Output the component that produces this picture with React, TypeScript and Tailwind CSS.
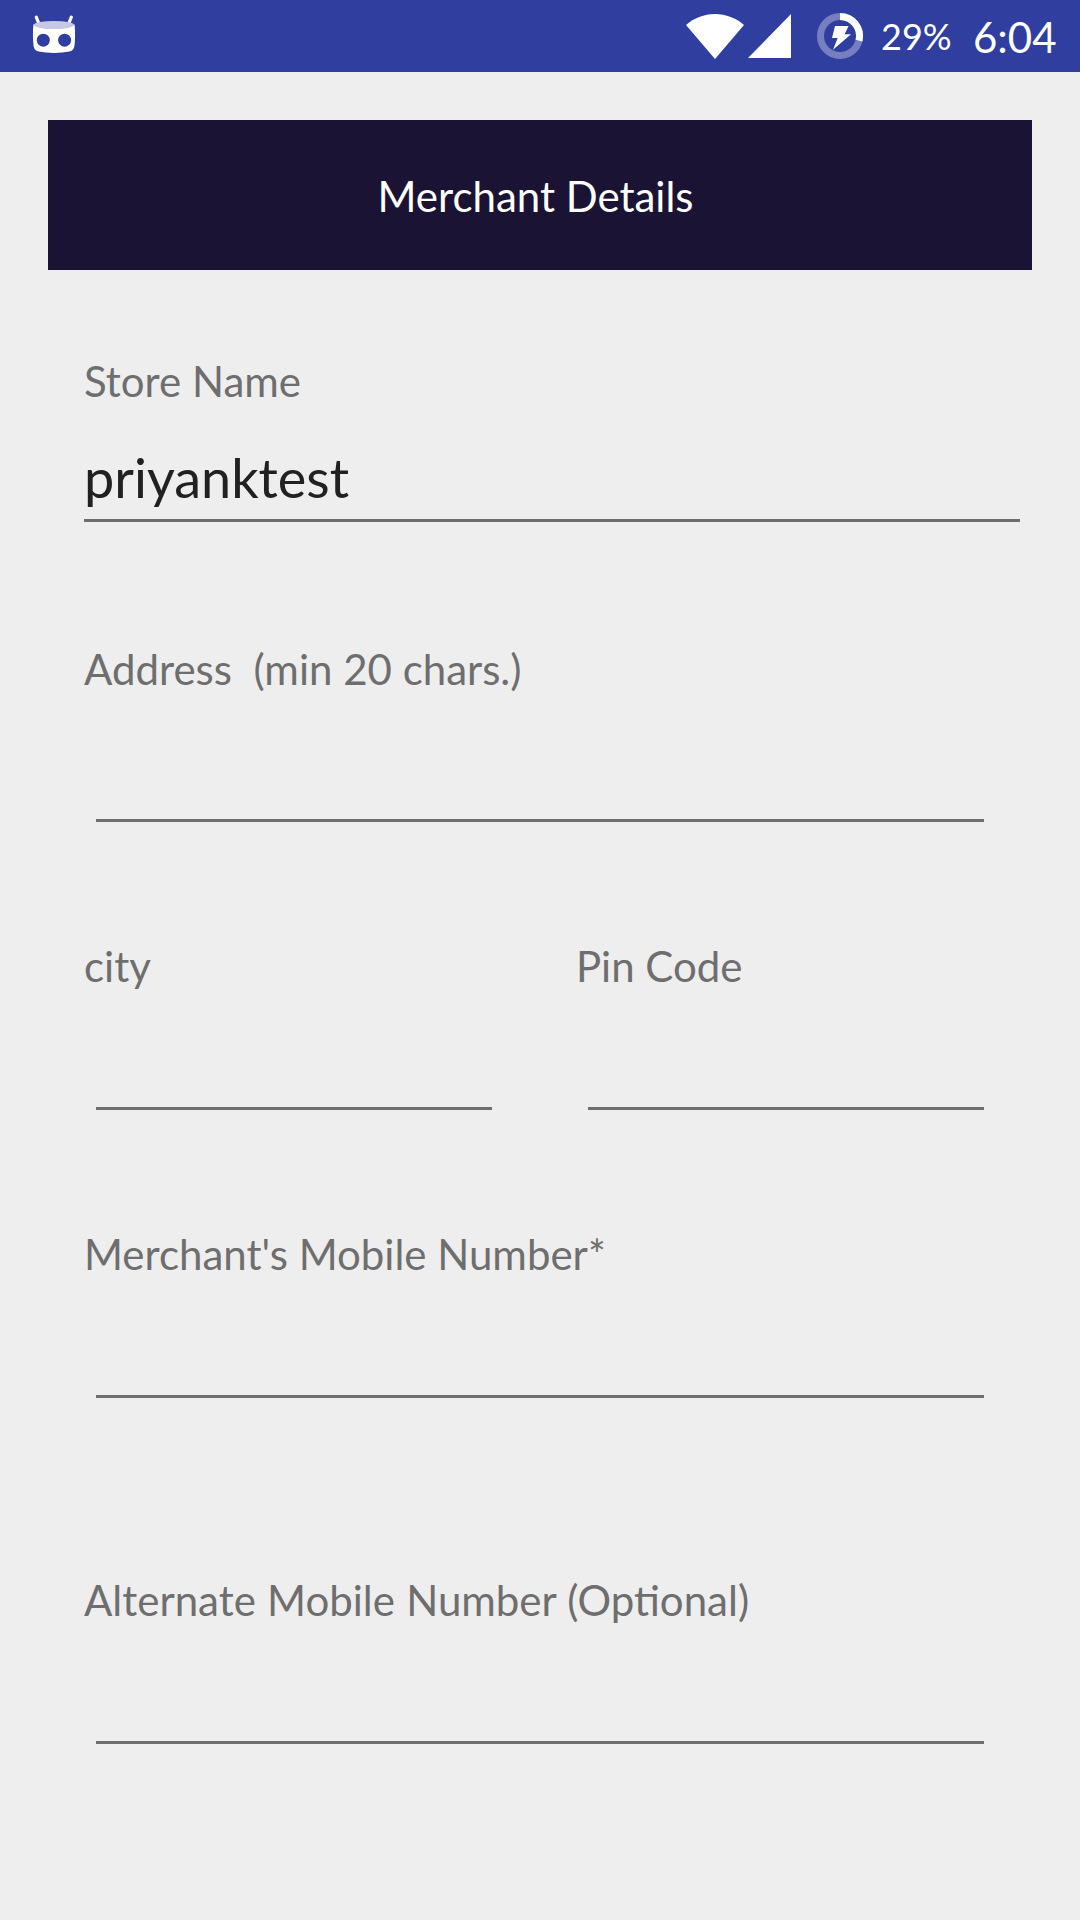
function RobotIcon() {
  return (
    <svg className="ml-[30px] h-[72px] w-[48px]" viewBox="30 0 48 72">
      <path d="M36.3 17.2 L39 24 M71.3 17.2 L68.6 24" stroke="#fff" strokeWidth="3.2" strokeLinecap="round" />
      <path
        d="M33.4 24.5 H74.6 C75.3 32 75.2 40 74.4 46 C74 49 72.5 50.8 69.5 51.6 C60 53.4 48 53.4 38.5 51.6 C35.5 50.8 34 49 33.6 46 C32.8 40 32.7 32 33.4 24.5 Z"
        fill="#fff"
      />
      <ellipse cx="54" cy="25" rx="20" ry="4.1" fill="#c6c9e5" />
      <circle cx="43.3" cy="40.2" r="6.5" fill="#303f9f" />
      <circle cx="64.6" cy="40.2" r="6.5" fill="#303f9f" />
    </svg>
  );
}

function SignalIcons() {
  return (
    <svg className="h-[72px] w-[182px]" viewBox="684 0 182 72" fill="#fff">
      <path d="M715 59 L686 25 C694 18 704 14 715 14 C726 14 736 18 744 25 Z" />
      <path d="M748 58 L791 14 V58 Z" />
      <circle cx="840" cy="36" r="19.5" fill="none" stroke="#767fbf" strokeWidth="7" />
      <path d="M840 16.5 A19.5 19.5 0 0 1 859 40.6" fill="none" stroke="#fff" strokeWidth="7" />
      <path d="M835 26 H848.6 L844.6 34.3 H851 L833 49.8 L837.7 38 H832 Z" />
    </svg>
  );
}

function Field({ label, className }: { label: string; className: string }) {
  return (
    <div className={className}>
      <label className="block h-[60px] leading-[60px] whitespace-pre">{label}</label>
      <div className="mr-9 ml-3 border-b-[3px] border-[#6e6e6e]" />
    </div>
  );
}

export default function App() {
  return (
    <div className="flex h-[1920px] w-[1080px] flex-col overflow-hidden bg-[#eeeeee] font-['Lato',sans-serif] text-[42px] text-[#6e6e6e]">
      <header className="flex h-[72px] shrink-0 bg-[#303f9f] text-white">
        <RobotIcon />
        <div className="ml-auto flex pr-[23px]">
          <SignalIcons />
          <span className="ml-[15px] w-[92px] text-[36px] leading-[72px] whitespace-nowrap">29%</span>
          <span className="w-[84px] text-[42px] leading-[74px] whitespace-nowrap">6:04</span>
        </div>
      </header>

      <h1 className="mx-12 mt-12 h-[150px] shrink-0 bg-[#1a1334] pr-[9px] text-center leading-[153px] text-white">
        Merchant Details
      </h1>

      <main className="flex flex-col pt-[81px] pl-[84px]">
        <div className="mr-[60px] h-[171px] border-b-[3px] border-[#6e6e6e]">
          <label className="block leading-[60px]">Store Name</label>
          <div className="mt-[37px] text-[54px] leading-[60px] text-[#212121]">priyanktest</div>
        </div>
        <Field label="Address  (min 20 chars.)" className="mt-[117px] mr-[60px] flex h-[183px] flex-col justify-between" />
        <div className="mt-[114px] mr-[60px] grid h-[174px] grid-cols-[444px_444px] gap-x-12">
          <Field label="city" className="flex flex-col justify-between" />
          <Field label="Pin Code" className="flex flex-col justify-between" />
        </div>
        <Field label="Merchant's Mobile Number*" className="mt-[114px] mr-[60px] flex h-[174px] flex-col justify-between" />
        <Field
          label="Alternate Mobile Number (Optional)"
          className="mt-[172px] mr-[60px] flex h-[174px] flex-col justify-between [word-spacing:0.5px]"
        />
      </main>
    </div>
  );
}
